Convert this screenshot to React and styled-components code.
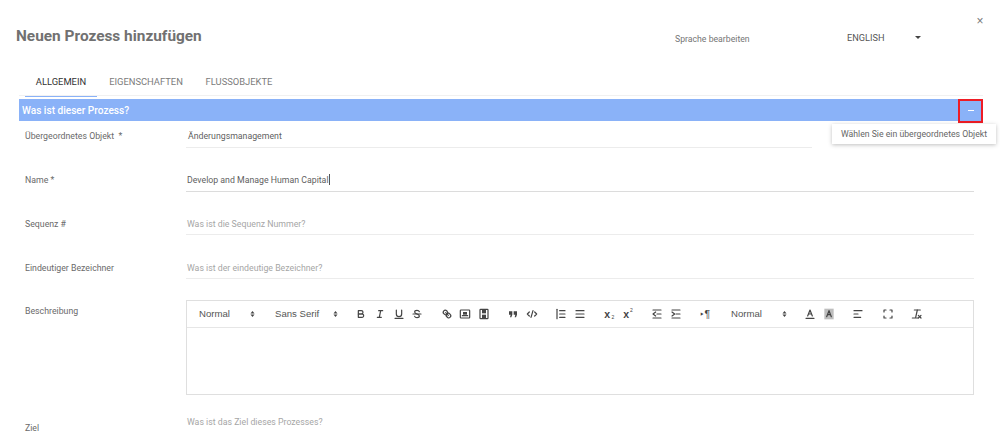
import React from "react";
import styled, { createGlobalStyle } from "styled-components";

const Global = createGlobalStyle`
  html, body { margin: 0; padding: 0; background: #fff; overflow: hidden; }
  body { font-family: Roboto, "Liberation Sans", sans-serif; }
`;
const Page = styled.div`
  position: relative; width: 1000px; height: 448px; overflow: hidden; background: #fff;
`;
const Header = styled.header`
  display: flex; align-items: center; height: 72px; padding-left: 16px;
`;
const Title = styled.h1`
  margin: 0; width: 659px; font-size: 15.4px; font-weight: 700; color: #717171;
`;
const LangLabel = styled.span`
  width: 172px; font-size: 8.7px; color: #757575; padding-top: 6px;
`;
const LangValue = styled.span`
  width: 68px; font-size: 9.2px; color: #555; padding-top: 2px;
`;
const Caret = styled.span`
  width: 0; height: 0; border-left: 3px solid transparent; border-right: 3px solid transparent;
  border-top: 3px solid #444; margin-top: 2px;
`;
const Close = styled.button`
  position: absolute; top: 14px; left: 975px; width: 10px; height: 14px; padding: 0; border: 0; background: none;
  color: #777; font-size: 12px; line-height: 14px; font-family: "Liberation Sans", sans-serif;
`;
const Tabs = styled.nav`
  display: flex; height: 23px; margin: 0 17px 0 19px; border-bottom: 1.5px solid #f1f1f1; padding-left: 6px;
`;
const Tab = styled.div`
  display: flex; justify-content: center; padding-top: 4px; height: 20px; width: ${p => p.$w}px; font-size: 9.4px;
  color: ${p => (p.$active ? "#333" : "#7b7b7b")};
  border-bottom: ${p => (p.$active ? "1.5px solid #8ab2f8" : "none")};
`;
const Banner = styled.div`
  display: flex; align-items: center; justify-content: space-between; height: 22px; margin: 3px 17px 0 19px;
  padding-left: 3px; background: #8ab2f8; color: #fff; font-size: 10.1px; font-weight: 500;
`;
const Collapse = styled.button`
  width: 25px; height: 24px; margin-bottom: -1px; padding: 0; border: 2px solid #ee1c25; background: #8ab2f8;
  display: flex; align-items: center; justify-content: center;
`;
const Dash = styled.span`width: 6px; height: 1px; background: #fff;`;
const Tooltip = styled.div`
  position: absolute; left: 832px; top: 124px; width: 164px; height: 20px; background: #fff; color: #666;
  font-size: 8.7px; display: flex; align-items: center; justify-content: center; box-sizing: border-box;
  box-shadow: 0 1px 4px rgba(0,0,0,.25);
`;
const Form = styled.div`padding: 4px 26px 0 25px;`;
const Row = styled.div`
  display: grid; grid-template-columns: 161px 1fr; height: ${p => p.$h || 44}px;
  font-size: 8.75px; color: #6a6a6a;
`;
const Label = styled.div`padding-top: ${p => p.$top ?? 5}px; line-height: 12px;`;
const Field = styled.div`
  height: 22.5px; box-sizing: border-box; line-height: 12px; padding: 5px 0 0 ${p => p.$indent || 1}px;
  width: ${p => p.$w || "auto"};
  border-bottom: ${p => (p.$strong ? "1.5px solid #dcdcdc" : p.$plain ? "none" : "1px solid #ececec")};
  color: ${p => (p.$ph ? "#a6a6a6" : "#5f5f5f")};
`;
const Cursor = styled.span`display: inline-block; width: 1px; height: 11px; background: #555; vertical-align: -2px;`;
const Editor = styled.div`
  height: 94.5px; box-sizing: border-box; border: 1px solid #dfdfdf;
`;
const Toolbar = styled.div`
  display: flex; align-items: center; height: 25.5px; padding-left: 12px; border-bottom: 1px solid #e6e6e6;
  color: #444; font-family: "Liberation Sans", sans-serif; font-size: 9.6px;
`;
const Picker = styled.div`
  display: flex; align-items: center; flex: none; width: ${p => p.$w}px; margin-left: ${p => p.$ml || 0}px;
`;
const PickerText = styled.span`width: ${p => p.$w}px; color: #555;`;
const Group = styled.div`display: flex; flex: none; margin-right: 10.6px;`;
const Btn = styled.span`
  width: 18.7px; height: 16px; display: flex; align-items: center; justify-content: center; color: #444;
  font-size: 10.5px; line-height: 1;
  b { font-weight: 700; }
`;
const Sub = styled.span`font-size: 5px; margin: 7px 0 0 1.5px;`;
const Sup = styled.span`font-size: 5px; margin: -6px 0 0 1px;`;
const I = styled.svg`
  width: 12px; height: 12px; fill: none; stroke: #444; stroke-width: 1.8; stroke-linecap: round; stroke-linejoin: round;
  .f { fill: #444; stroke: none; }
`;
const ArrowIcon = styled(I)`width: 9px; height: 12px;`;
const Icon = ({ children }) => <Btn><I viewBox="0 0 18 18">{children}</I></Btn>;
const Arrows = () => (
  <ArrowIcon viewBox="0 0 18 18">
    <polygon className="f" points="5 8 9 3 13 8" />
    <polygon className="f" points="5 10 9 15 13 10" />
  </ArrowIcon>
);

const Lines = ({ x = 7 }) => (<>
  <line x1={x} x2="15" y1="4" y2="4" /><line x1={x} x2="15" y1="9" y2="9" /><line x1={x} x2="15" y1="14" y2="14" />
</>);

export default function App() {
  return (
    <Page>
      <Global />
      <Header>
        <Title>Neuen Prozess hinzufügen</Title>
        <LangLabel>Sprache bearbeiten</LangLabel>
        <LangValue>ENGLISH</LangValue>
        <Caret />
      </Header>
      <Close>×</Close>
      <Tabs>
        <Tab $w={72} $active>ALLGEMEIN</Tab>
        <Tab $w={98}>EIGENSCHAFTEN</Tab>
        <Tab $w={88}>FLUSSOBJEKTE</Tab>
      </Tabs>
      <Banner>
        Was ist dieser Prozess?
        <Collapse aria-label="Einklappen"><Dash /></Collapse>
      </Banner>
      <Tooltip>Wählen Sie ein übergeordnetes Objekt</Tooltip>
      <Form>
        <Row>
          <Label>Übergeordnetes Objekt &nbsp;*</Label>
          <Field $indent={2} $w="626px">Änderungsmanagement</Field>
        </Row>
        <Row $h={43.5}>
          <Label>Name *</Label>
          <Field $strong>Develop and Manage Human Capital<Cursor /></Field>
        </Row>
        <Row>
          <Label>Sequenz #</Label>
          <Field $ph>Was ist die Sequenz Nummer?</Field>
        </Row>
        <Row $h={43.5}>
          <Label>Eindeutiger Bezeichner</Label>
          <Field $ph>Was ist der eindeutige Bezeichner?</Field>
        </Row>
        <Row $h={111}>
          <Label>Beschreibung</Label>
          <Editor>
            <Toolbar>
              <Picker $w={76}><PickerText $w={49}>Normal</PickerText><Arrows /></Picker>
              <Picker $w={77}><PickerText $w={56}>Sans Serif</PickerText><Arrows /></Picker>
              <Group>
                <Icon><path d="M5,4H9.5A2.5,2.5,0,0,1,12,6.5v0A2.5,2.5,0,0,1,9.5,9H5V4Z" /><path d="M5,9h5.5A2.5,2.5,0,0,1,13,11.5v0A2.5,2.5,0,0,1,10.5,14H5V9Z" /></Icon>
                <Icon><line x1="7" x2="13" y1="4" y2="4" /><line x1="5" x2="11" y1="14" y2="14" /><line x1="8" x2="10" y1="14" y2="4" /></Icon>
                <Icon><path d="M5,3V9a4,4,0,0,0,4,4h0a4,4,0,0,0,4-4V3" /><line x1="3" x2="15" y1="15.5" y2="15.5" /></Icon>
                <Icon><line x1="3" x2="15" y1="9" y2="9" /><path d="M12.5,5.5C12,4,10.5,3.5,9,3.5S5.5,4.3,5.5,6,7,8.3,9,9s3.5,1.2,3.5,3S10.6,14.5,9,14.5,6,14,5.5,12.5" /></Icon>
              </Group>
              <Group>
                <Icon><line x1="7" x2="11" y1="7" y2="11" /><path d="M8.9,4.577a3.476,3.476,0,0,1,.36,4.679A3.476,3.476,0,0,1,4.577,8.9C3.185,7.5,2.035,6.4,4.217,4.217S7.5,3.185,8.9,4.577Z" /><path d="M13.423,9.1a3.476,3.476,0,0,0-4.679-.36,3.476,3.476,0,0,0,.36,4.679c1.392,1.392,2.5,2.542,4.679.36S14.815,10.5,13.423,9.1Z" /></Icon>
                <Icon><rect x="2" y="3" width="14" height="12" rx="1" /><line x1="5" x2="13" y1="11.5" y2="11.5" /><rect className="f" x="6" y="6" width="6" height="4" /></Icon>
                <Icon><rect x="3" y="2" width="12" height="14" rx="1" /><rect className="f" x="6" y="3" width="6" height="5" /><rect className="f" x="6" y="10" width="6" height="5" /></Icon>
              </Group>
              <Group>
                <Icon><path className="f" d="M3,5H8V10L6.5,14H4.5L5.5,10H3Z" /><path className="f" d="M10,5h5V10L13.5,14h-2L12.5,10H10Z" /></Icon>
                <Icon><polyline points="5 6 2 9 5 12" /><polyline points="13 6 16 9 13 12" /><line x1="10.5" x2="7.5" y1="4" y2="14" /></Icon>
              </Group>
              <Group>
                <Icon><Lines /><line x1="3" x2="3" y1="2" y2="16" /></Icon>
                <Icon><Lines x={3} /></Icon>
              </Group>
              <Group>
                <Btn><b>x</b><Sub>2</Sub></Btn>
                <Btn><b>x</b><Sup>2</Sup></Btn>
              </Group>
              <Group>
                <Icon><line x1="3" x2="15" y1="3" y2="3" /><line x1="3" x2="15" y1="15" y2="15" /><line x1="9" x2="15" y1="9" y2="9" /><polyline points="7 6 3 9 7 12" /></Icon>
                <Icon><line x1="3" x2="15" y1="3" y2="3" /><line x1="3" x2="15" y1="15" y2="15" /><line x1="9" x2="15" y1="9" y2="9" /><polyline points="3 6 7 9 3 12" /></Icon>
              </Group>
              <Btn>‣¶</Btn>
              <Picker $w={70} $ml={16.4}><PickerText $w={49}>Normal</PickerText><Arrows /></Picker>
              <Group>
                <Icon><path d="M5.5,12 L9,3 12.5,12 M7,9H11" /><line x1="3" x2="15" y1="15.5" y2="15.5" /></Icon>
                <Icon><rect className="f" style={{ opacity: 0.35 }} x="2" y="1" width="14" height="16" /><path d="M5.5,13 L9,4 12.5,13 M7,10H11" /></Icon>
              </Group>
              <Group>
                <Icon><line x1="3" x2="15" y1="4" y2="4" /><line x1="3" x2="9" y1="9" y2="9" /><line x1="3" x2="13" y1="14" y2="14" /></Icon>
              </Group>
              <Group>
                <Icon><path d="M3,6V3H6M12,3h3V6M15,12v3H12M6,15H3V12" /></Icon>
              </Group>
              <Group>
                <Icon><line x1="5" x2="14" y1="3" y2="3" /><line x1="9.5" x2="7" y1="3" y2="14" /><line x1="2" x2="10" y1="15" y2="15" /><line x1="11" x2="15" y1="11" y2="15" /><line x1="15" x2="11" y1="11" y2="15" /></Icon>
              </Group>
            </Toolbar>
          </Editor>
        </Row>
        <Row $h={40}>
          <Label $top={11}>Ziel</Label>
          <Field $ph $plain>Was ist das Ziel dieses Prozesses?</Field>
        </Row>
      </Form>
    </Page>
  );
}
